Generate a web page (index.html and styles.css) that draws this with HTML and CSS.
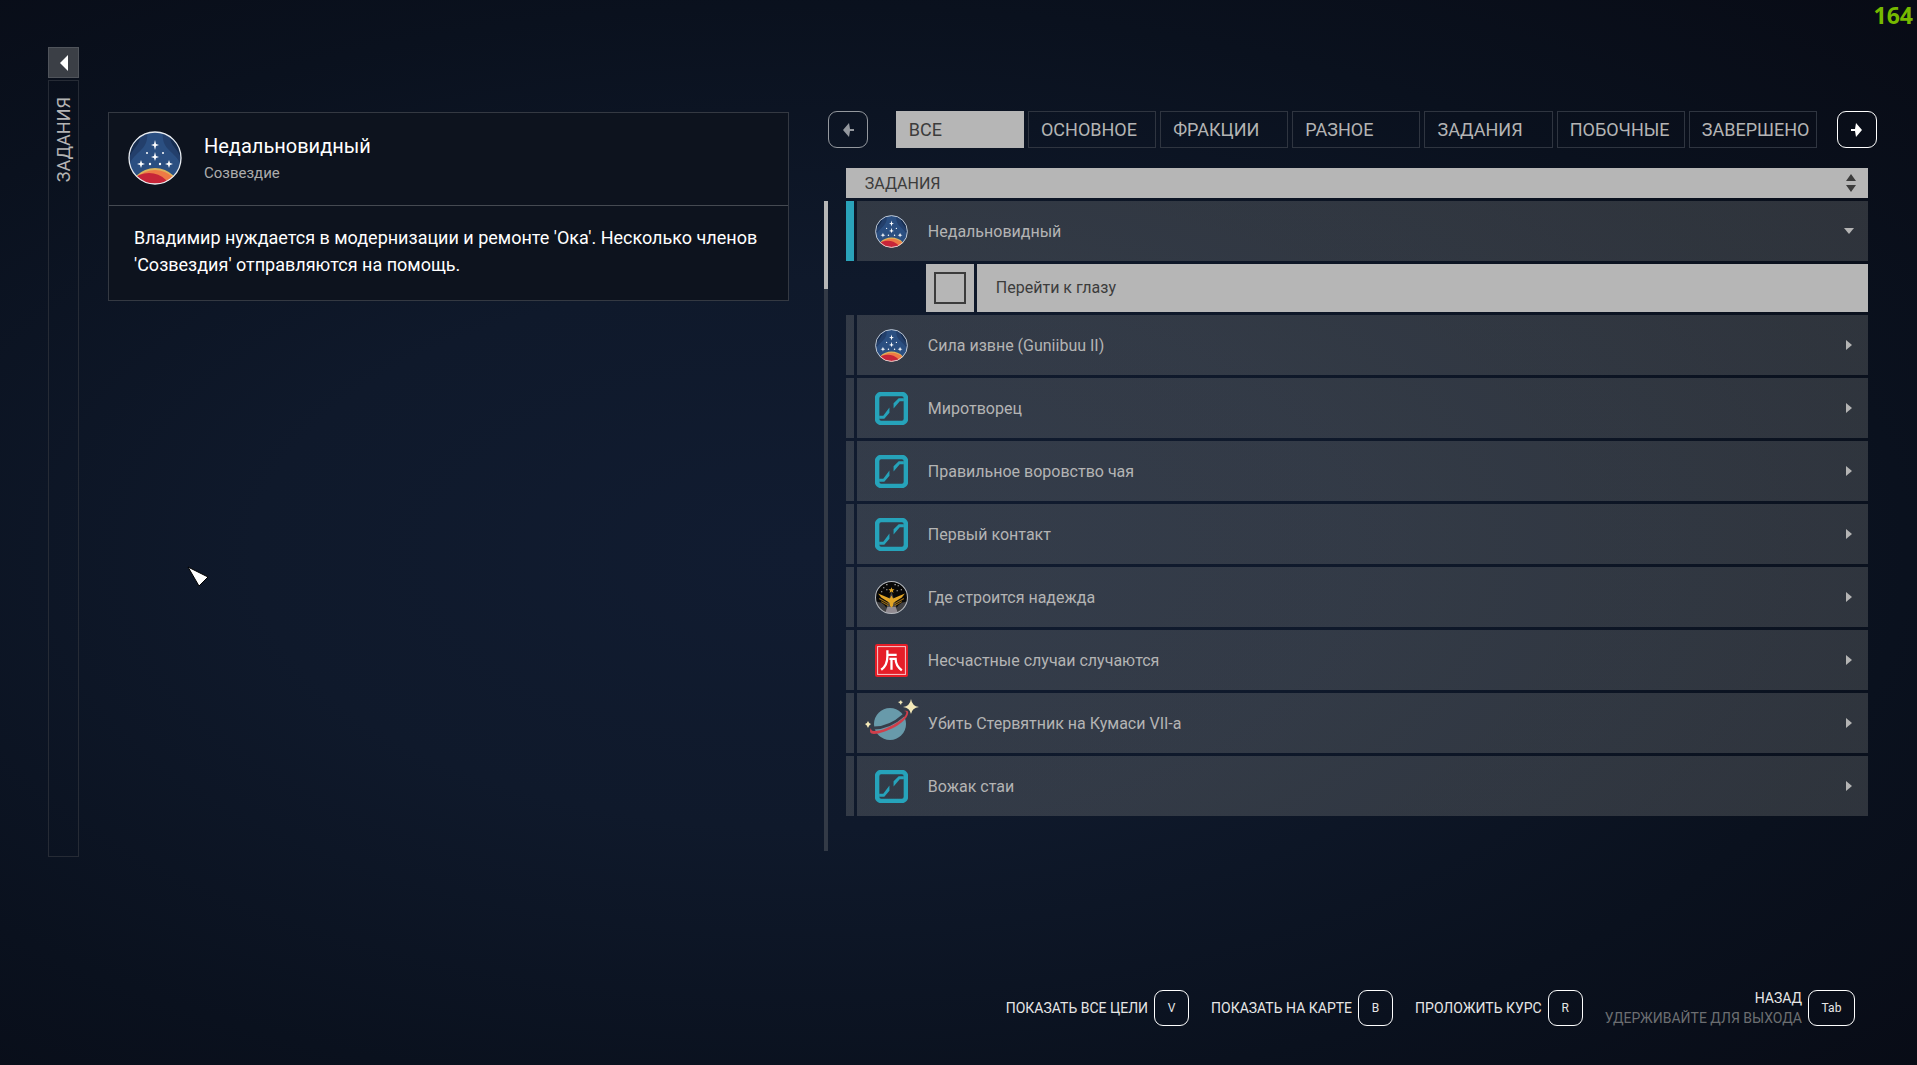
FILE: index.html
```html
<!doctype html>
<html lang="ru">
<head>
    <meta charset="UTF-8">
    <meta name="viewport" content="width=device-width, initial-scale=1.0">
    <title>Задания</title>
    <link rel="stylesheet" href="styles.css">
</head>
<body>
    <!-- Shared icons -->
    <svg class="sprite" aria-hidden="true">
        <defs>
            <clipPath id="disc"><circle cx="27" cy="27" r="26"/></clipPath>
        </defs>
        <symbol id="constellation" viewBox="0 0 54 54">
            <g clip-path="url(#disc)">
                <path fill="#2b4f81" d="M0 0h54v54H0z"/>
                <path fill="#233f6b" d="M0 0h19c1 9-1 14-6 19S3 28 0 36zM54 0H35c-1 9 1 14 6 19s10 9 13 17z"/>
                <path fill="#162d50" d="M0 0h12c1 8-1 12-5 17S2 24 0 30zM54 0H42c-1 8 1 12 5 17s5 7 7 13z"/>
                <circle cx="27" cy="63" r="26" fill="#dcb35c"/>
                <circle cx="27" cy="65" r="26" fill="#ee7a45"/>
                <circle cx="21" cy="66" r="24" fill="#c72538"/>
            </g>
            <g fill="#fff">
                <path d="M27 9l1 4 3 1-3 1-1 4-1-4-3-1 3-1zM27 21l1 4 3 1-3 1-1 3-1-3-3-1 3-1zM13 29l1 3 3 1-3 1-1 3-1-3-3-1 3-1zM41 29l1 3 3 1-3 1-1 3-1-3-3-1 3-1z"/>
                <circle cx="19" cy="22" r="1"/>
                <circle cx="35" cy="22" r="1"/>
                <circle cx="22" cy="33" r="1.200"/>
                <circle cx="32" cy="33" r="1.200"/>
            </g>
            <circle cx="27" cy="27" r="26" fill="none" stroke="#e8ecf0" stroke-width="1.300"/>
        </symbol>
        <symbol id="activity" viewBox="0 0 32 32">
            <rect x="2" y="2" width="28" height="28" rx="4" fill="none" stroke="#26a3ba" stroke-width="4.400"/>
            <path fill="#26a3ba" d="M4 23h4l6-8v5l-5 6H4zM28 9h-4l-6 7v-5l5-5h5z"/>
        </symbol>
        <symbol id="vanguard" viewBox="0 0 32 32">
            <circle cx="16" cy="16" r="15.500" fill="#080808"/>
            <path fill="#414143" d="M1 20c4 0 8 2 10 6l5-16 5 16c2-4 6-6 10-6-1 6-7 11.500-15 11.500S2 26 1 20z"/>
            <path fill="#918b91" d="M12 25h8l2 5.500c-4 1.300-8 1.300-12 0z"/>
            <path fill="#e2a526" d="M16 6l.8 2h2.200l-1.700 1.400.6 2.200-1.900-1.300-1.900 1.300.6-2.200L13 8h2.200zM16 14l1.500 3L29 12l-3 4-8 5-.5 3-1.500 2-1.500-2-.5-3-8-5-3-4 11.500 5z"/>
            <path fill="none" stroke="#9a6d18" d="M4 17l9 5M28 17l-9 5M6 20l7 4M26 20l-7 4"/>
            <path fill="#ddd" d="M8 6h1v1H8zM11 3h1v1h-1zM22 4h1v1h-1zM25 8h1v1h-1zM6 10h1v1H6zM19 3h1v1h-1zM21 9h1v1h-1zM11 8h1v1h-1z"/>
            <circle cx="16" cy="16" r="15.500" fill="none" stroke="#b5b9bf"/>
        </symbol>
        <symbol id="ryujin" viewBox="0 0 32 32">
            <rect width="32" height="32" rx="2" fill="#e61e28"/>
            <rect x="2.500" y="2.500" width="27" height="27" fill="none" stroke="#f7c4c6"/>
            <path fill="none" stroke="#fff" stroke-width="2.200" d="M12 6v6c0 6-2 10-6 13M12 10.500h9M14 14.500h6c0 5 2 8 6 11M16 14v11"/>
        </symbol>
        <symbol id="planet" viewBox="0 0 54 42">
            <circle cx="25" cy="25" r="16" fill="#689aaa"/>
            <path fill="none" stroke="#363d4a" stroke-width="3" d="M9 29c10 0 21-5 30-13"/>
            <path fill="#cf3f4b" d="M39 12c3-1 5 0 4 3-1 4-6 9-13 13-8 4-16 7-21 7-4 0-5-3-3-6 0 3 2 3 4 3 5 0 12-3 18-6 7-4 12-8 13-11 1-2 0-3-2-3z"/>
            <path fill="#f4e9b8" d="M46 0q1 7 8 8-7 1-8 7-1-6-8-7 7-1 8-8zM36 1q0 2 2 2-2 1-2 3-1-2-3-3 2 0 3-2zM3 22q1 3 3 3-2 1-3 4-1-3-3-4 2 0 3-3z"/>
        </symbol>
        <symbol id="arrow" viewBox="0 0 12 14">
            <path fill="currentColor" d="M0 6h4l1-6 6 7-6 7-1-6H0z"/>
        </symbol>
        <symbol id="caret" viewBox="0 0 6 10">
            <path fill="currentColor" d="M0 0l6 5-6 5z"/>
        </symbol>
    </svg>

    <aside class="fps">164</aside>

    <main>
        <nav class="rail">
            <button class="rail-toggle" aria-label="Свернуть">
                <svg width="8" height="16" viewBox="0 0 8 16"><path fill="#fff" d="M8 0v16L0 8z"/></svg>
            </button>
            <div class="rail-body"><span>ЗАДАНИЯ</span></div>
        </nav>

        <article class="details">
            <header>
                <svg class="emblem"><use href="#constellation"/></svg>
                <div>
                    <h1>Недальновидный</h1>
                    <p>Созвездие</p>
                </div>
            </header>
            <p class="description">Владимир нуждается в модернизации и ремонте 'Ока'. Несколько членов 'Созвездия' отправляются на помощь.</p>
        </article>

        <section class="quests">
            <div class="filters">
                <button class="page-key prev" aria-label="Назад"><svg width="12" height="14"><use href="#arrow"/></svg></button>
                <div class="tabs">
                    <button class="active">ВСЕ</button>
                    <button>ОСНОВНОЕ</button>
                    <button>ФРАКЦИИ</button>
                    <button>РАЗНОЕ</button>
                    <button>ЗАДАНИЯ</button>
                    <button>ПОБОЧНЫЕ</button>
                    <button>ЗАВЕРШЕНО</button>
                </div>
                <button class="page-key" aria-label="Вперёд"><svg width="12" height="14"><use href="#arrow"/></svg></button>
            </div>

            <button class="list-header">
                <span>ЗАДАНИЯ</span>
                <svg width="10" height="18" viewBox="0 0 10 18"><path fill="#3c3c3c" d="M0 7l5-7 5 7zM0 11l5 7 5-7z"/></svg>
            </button>

            <div class="scroller">
                <div class="scrollbar"><div class="thumb"></div></div>
                <ul class="quest-list">
                    <li>
                        <button class="quest tracked">
                            <svg class="icon"><use href="#constellation"/></svg>
                            <span>Недальновидный</span>
                            <svg class="caret open"><use href="#caret"/></svg>
                        </button>
                        <div class="objective">
                            <span class="check"><input type="checkbox" id="objective-1"></span>
                            <label for="objective-1">Перейти к глазу</label>
                        </div>
                    </li>
                    <li>
                        <button class="quest">
                            <svg class="icon"><use href="#constellation"/></svg>
                            <span>Сила извне (Guniibuu II)</span>
                            <svg class="caret"><use href="#caret"/></svg>
                        </button>
                    </li>
                    <li>
                        <button class="quest">
                            <svg class="icon"><use href="#activity"/></svg>
                            <span>Миротворец</span>
                            <svg class="caret"><use href="#caret"/></svg>
                        </button>
                    </li>
                    <li>
                        <button class="quest">
                            <svg class="icon"><use href="#activity"/></svg>
                            <span>Правильное воровство чая</span>
                            <svg class="caret"><use href="#caret"/></svg>
                        </button>
                    </li>
                    <li>
                        <button class="quest">
                            <svg class="icon"><use href="#activity"/></svg>
                            <span>Первый контакт</span>
                            <svg class="caret"><use href="#caret"/></svg>
                        </button>
                    </li>
                    <li>
                        <button class="quest">
                            <svg class="icon"><use href="#vanguard"/></svg>
                            <span>Где строится надежда</span>
                            <svg class="caret"><use href="#caret"/></svg>
                        </button>
                    </li>
                    <li>
                        <button class="quest">
                            <svg class="icon"><use href="#ryujin"/></svg>
                            <span>Несчастные случаи случаются</span>
                            <svg class="caret"><use href="#caret"/></svg>
                        </button>
                    </li>
                    <li>
                        <button class="quest">
                            <svg class="icon planet"><use href="#planet"/></svg>
                            <span>Убить Стервятник на Кумаси VII-a</span>
                            <svg class="caret"><use href="#caret"/></svg>
                        </button>
                    </li>
                    <li>
                        <button class="quest">
                            <svg class="icon"><use href="#activity"/></svg>
                            <span>Вожак стаи</span>
                            <svg class="caret"><use href="#caret"/></svg>
                        </button>
                    </li>
                </ul>
            </div>
        </section>
    </main>

    <footer>
        <button class="hint">ПОКАЗАТЬ ВСЕ ЦЕЛИ <kbd>V</kbd></button>
        <button class="hint">ПОКАЗАТЬ НА КАРТЕ <kbd>B</kbd></button>
        <button class="hint">ПРОЛОЖИТЬ КУРС <kbd>R</kbd></button>
        <button class="hint back">
            <span>НАЗАД<small>УДЕРЖИВАЙТЕ ДЛЯ ВЫХОДА</small></span>
            <kbd class="wide">Tab</kbd>
        </button>
    </footer>

    <svg class="cursor" width="22" height="22" viewBox="0 0 22 22"><path fill="#fff" stroke="#000" d="M1 1l20 10-9 9z"/></svg>
</body>
</html>
```
FILE: styles.css
```css
* {
    box-sizing: border-box;
}

body {
    display: flex;
    flex-direction: column;
    min-height: 100vh;
    margin: 0;
    background: #0a0f1a radial-gradient(ellipse at 42% 52%, #111c31 0%, #0f192b 35%, #0a111e 70%, #080b15 100%);
    color: #fff;
    font-family: Roboto, "Liberation Sans", sans-serif;
    font-size: 16px;
}

h1, p, ul {
    margin: 0;
    padding: 0;
}

button {
    padding: 0;
    border: none;
    background: none;
    color: inherit;
    font: inherit;
    cursor: pointer;
}

.sprite {
    position: absolute;
    width: 0;
    height: 0;
}

.fps {
    position: absolute;
    top: 0;
    right: 4px;
    color: #76b900;
    font: bold 23px/31px "Noto Sans", sans-serif;
}

.cursor {
    position: absolute;
    left: 187px;
    top: 566px;
}

main {
    display: grid;
    grid-template-columns: 31px 15fr 23fr;
    gap: 29px;
    padding: 47px 40px 0 48px;
}

/* Left rail */
.rail {
    display: flex;
    flex-direction: column;
    gap: 2px;
}

.rail-toggle {
    display: flex;
    align-items: center;
    justify-content: center;
    height: 31px;
    background: #3b3f46;
    border: 1px solid #50545b;
}

.rail-body {
    flex: 1;
    padding-top: 16px;
    border: 1px solid #262b35;
}

.rail-body span {
    writing-mode: vertical-rl;
    transform: rotate(180deg);
    width: 29px;
    color: #b4b4b4;
    font-size: 18px;
    line-height: 29px;
}

/* Quest details */
.details {
    align-self: start;
    margin: 65px 6px 0 0;
    background: #0d131e;
    border: 1px solid #343942;
}

.details header {
    display: flex;
    align-items: center;
    gap: 22px;
    height: 93px;
    padding: 0 19px 2px;
    border-bottom: 1px solid #454a52;
}

.emblem {
    width: 54px;
    height: 54px;
}

h1 {
    font-size: 20px;
    font-weight: normal;
    line-height: 30px;
}

.details header p {
    color: #acacac;
    font-size: 15px;
    line-height: 24px;
}

.description {
    padding: 18px 24px 22px 25px;
    font-size: 18px;
    line-height: 27px;
}

/* Filters */
.filters {
    display: flex;
    margin-top: 64px;
    padding-left: 4px;
}

.page-key {
    display: flex;
    align-items: center;
    justify-content: center;
    width: 40px;
    height: 37px;
    border: 1px solid #fff;
    border-radius: 9px;
}

.page-key.prev {
    color: #94989e;
    border-color: #94989e;
}

.prev svg {
    transform: scaleX(-1);
}

.tabs {
    display: grid;
    flex: 1;
    grid-template-columns: repeat(7, 1fr);
    gap: 4px;
    margin: 0 20px 0 28px;
}

.tabs button {
    padding-left: 12px;
    border: 1px solid #2f3540;
    color: #b4b4b4;
    font-size: 18px;
    text-align: left;
}

.tabs .active {
    background: #b6b6b6;
    border-color: #b6b6b6;
    color: #3c3c3c;
}

/* Quest list */
.quests {
    display: flex;
    flex-direction: column;
    padding-bottom: 6px;
}

.list-header {
    display: flex;
    align-items: center;
    justify-content: space-between;
    height: 30px;
    margin: 20px 9px 3px 22px;
    padding: 0 12px 0 19px;
    background: #b6b6b6;
    color: #3c3c3c;
}

.scroller {
    display: flex;
    gap: 18px;
    margin-right: 9px;
}

.scrollbar {
    width: 4px;
    background: #333a46;
}

.thumb {
    height: 88px;
    background: #b6b6b6;
}

.quest-list {
    display: grid;
    flex: 1;
    gap: 3px;
    padding-bottom: 35px;
    list-style: none;
}

.quest {
    display: flex;
    align-items: center;
    gap: 20px;
    width: 100%;
    height: 60px;
    padding: 0 16px 0 29px;
    background:
        linear-gradient(rgba(138, 140, 138, .29) 0 0) left / 8px 100% no-repeat,
        linear-gradient(rgba(138, 140, 138, .29) 0 0) 11px 0 no-repeat;
    color: #b4b4b4;
    text-align: left;
}

.quest.tracked {
    background:
        linear-gradient(#2aa3ba 0 0) left / 8px 100% no-repeat,
        linear-gradient(rgba(138, 140, 138, .29) 0 0) 11px 0 no-repeat;
}

.icon {
    width: 33px;
    height: 33px;
}

/* The stars and ring reach outside the usual icon box */
.icon.planet {
    width: 54px;
    height: 42px;
    margin: 0 -11px 6px -10px;
}

.caret {
    width: 6px;
    height: 10px;
    margin-left: auto;
}

.caret.open {
    transform: rotate(90deg);
}

.objective {
    display: flex;
    gap: 3px;
    height: 48px;
    margin: 3px 0 0 80px;
    color: #3c3c3c;
}

.check {
    display: flex;
    align-items: center;
    justify-content: center;
    width: 48px;
    background: #b6b6b6;
}

.check input {
    appearance: none;
    width: 32px;
    height: 32px;
    margin: 0;
    border: 2px solid #3c3c3c;
}

.objective label {
    flex: 1;
    padding-left: 19px;
    background: #b6b6b6;
    line-height: 48px;
}

/* Key hints */
footer {
    display: flex;
    justify-content: flex-end;
    gap: 22px;
    margin-top: auto;
    padding: 20px 62px 37px;
}

.hint {
    display: flex;
    align-items: center;
    gap: 6px;
    color: #e6e6e6;
    font-size: 14px;
}

.back span {
    line-height: 20px;
    text-align: right;
}

.back small {
    display: block;
    color: #6c6e71;
    font-size: 14px;
}

kbd {
    width: 35px;
    border: 1px solid #fff;
    border-radius: 9px;
    font-family: inherit;
    font-size: 12px;
    line-height: 34px;
    text-align: center;
}

kbd.wide {
    width: 47px;
}
```
